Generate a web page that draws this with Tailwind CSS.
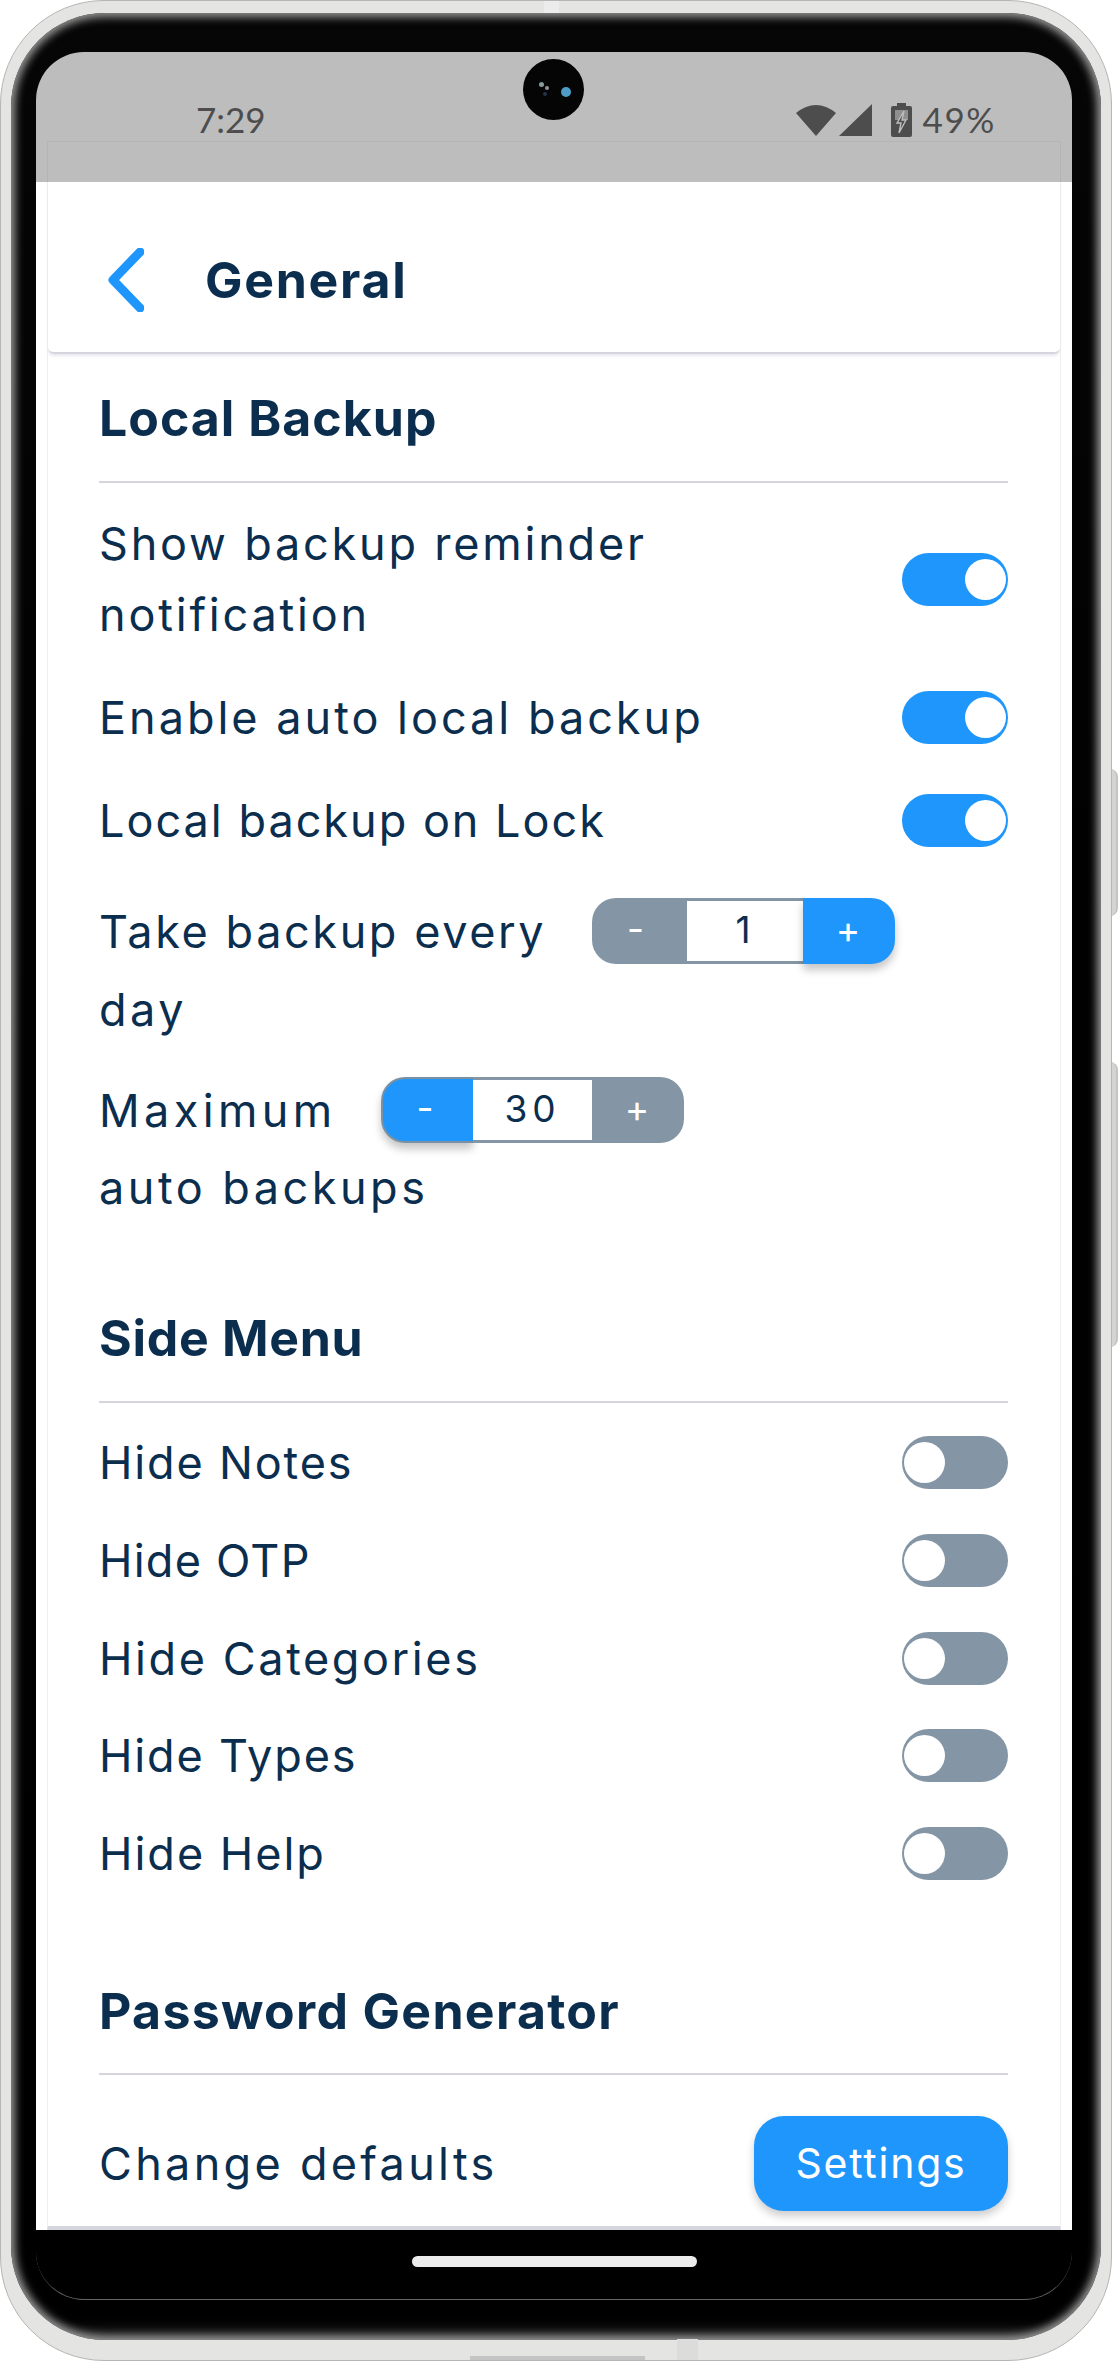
<!DOCTYPE html>
<html lang="en">
<head>
    <meta charset="UTF-8">
    <title>General</title>
    <script src="https://cdn.jsdelivr.net/npm/@tailwindcss/browser@4"></script>
</head>
<body class="bg-white font-[Inter,sans-serif] text-[#0b2e4f]">
<div class="relative w-[1118px] h-[2362px] overflow-hidden">
    <!-- side buttons -->
    <div class="absolute left-[1108px] top-[769px] w-[10px] h-[147px] rounded-r-[8px] bg-[#d4d4d2] border-r-2 border-[#c4c4c4]"></div>
    <div class="absolute left-[1108px] top-[1062px] w-[10px] h-[285px] rounded-r-[8px] bg-[#d4d4d2] border-r-2 border-[#c4c4c4]"></div>

    <!-- device -->
    <div class="relative w-[1112px] h-[2361px] rounded-[104px] bg-[#e4e4e2] border border-[#b5b5b3] pt-[12px] px-[10px]">
        <div class="absolute left-[543px] top-0 w-[15px] h-[12px] bg-[#ececec]"></div>
        <div class="absolute left-[469px] bottom-0 w-[175px] h-[4px] bg-[#c4c4c4]"></div>
        <div class="absolute left-[676px] bottom-0 w-[21px] h-[21px] bg-[#dcdcdc]"></div>

        <div class="w-[1090px] h-[2327px] rounded-[94px] bg-linear-to-b from-[#060606] via-black via-[98.8%] to-[#2b2b2b] shadow-[inset_0_0_8px_4px_#9a9a9a] pt-[39px] pl-[25px]">
            <div class="relative w-[1036px] h-[2248px] rounded-[48px] overflow-hidden border-b border-[#666] bg-black flex flex-col">
                <!-- status bar -->
                <div class="bg-[#bdbdbd] h-[130px] shrink-0 text-[#4d4d4d]">
                    <div class="h-[89px] flex justify-between pt-[51px] pl-[160px] pr-[76px] text-[35px] leading-[36px] font-[Lato,sans-serif]">
                        <span class="-mt-[2px]">7:29</span>
                        <div class="flex items-start">
                            <svg width="40" height="33" viewBox="0 0 40 33"><path d="M20 33 L0 10 Q20 -6 40 10 Z" fill="#4d4d4d"/></svg>
                            <svg class="ml-[3px] mt-[1px]" width="33" height="32" viewBox="0 0 33 32"><path d="M0 32 H33 V0 Z" fill="#4d4d4d"/></svg>
                            <svg class="ml-[19px]" width="21" height="34" viewBox="0 0 21 34">
                                <path d="M6 0 H15 V3 H19 Q21 3 21 5 V32 Q21 34 19 34 H2 Q0 34 0 32 V5 Q0 3 2 3 H6 Z" fill="#4d4d4d"/>
                                <path d="M4 7 H17 V17 H4 Z" fill="#8f8f8f"/>
                                <path d="M13 8 L6 20 H10 L8 30 L15 17 H11 Z" fill="#4d4d4d" stroke="#bdbdbd" stroke-width="1.4"/>
                            </svg>
                            <span class="ml-[11px] -mt-[2px] tracking-[1.6px]">49%</span>
                        </div>
                    </div>
                    <div class="mx-[11px] h-[41px] border-t border-x border-[#b4b4b4]"></div>
                </div>

                <!-- camera -->
                <div class="absolute left-[487px] top-[7px] w-[61px] h-[61px] rounded-full bg-[#050505]">
                    <div class="absolute left-[16px] top-[23px] w-[5px] h-[5px] rounded-full bg-[#8a9a9a]"></div>
                    <div class="absolute left-[22px] top-[27px] w-[4px] h-[4px] rounded-full bg-[#9a8fa0]"></div>
                    <div class="absolute left-[20px] top-[33px] w-[4px] h-[4px] rounded-full bg-[#24344f]"></div>
                    <div class="absolute left-[38px] top-[28px] w-[10px] h-[10px] rounded-full bg-[#4d9cc8]"></div>
                </div>

                <!-- app -->
                <div class="bg-white h-[2048px] shrink-0">
                    <div class="mx-[11px] h-full border-x border-[#eeeeee] border-b-[4px] border-b-[#d5d5e0] flex flex-col">
                        <header class="h-[172px] shrink-0 flex items-center pl-[60px] pt-[25px] border-b-2 border-[#d5d5e0] rounded-b-[6px] shadow-[0_2px_3px_#e8e8ee]">
                            <svg class="mr-[61px]" width="36" height="64" viewBox="0 0 36 64" fill="none" stroke="#1e96fc" stroke-width="9" stroke-linecap="round" stroke-linejoin="round"><path d="M32 4 L5 32 L32 60"/></svg>
                            <h1 class="text-[50px] leading-[60px] font-bold tracking-[1.7px]">General</h1>
                        </header>

                        <main class="pl-[51px] pr-[52px] pt-[34px] text-[45px] leading-[71px]">
                            <h2 class="text-[50px] leading-[60px] font-bold tracking-[1px] pb-[33px] border-b-2 border-[#d5d5e0]">Local Backup</h2>

                            <div class="mt-[25px] flex flex-col gap-[32px]">
                                <div class="flex items-center justify-between">
                                    <span class="w-[700px] tracking-[2.8px]">Show backup reminder notification</span>
                                    <div class="w-[106px] h-[53px] rounded-full bg-[#1e96fc] flex items-center justify-end pr-[2px]"><div class="w-[41px] h-[41px] rounded-full bg-white"></div></div>
                                </div>
                                <div class="flex items-center justify-between">
                                    <span class="tracking-[3px]">Enable auto local backup</span>
                                    <div class="w-[106px] h-[53px] rounded-full bg-[#1e96fc] flex items-center justify-end pr-[2px]"><div class="w-[41px] h-[41px] rounded-full bg-white"></div></div>
                                </div>
                                <div class="flex items-center justify-between">
                                    <span class="tracking-[2px]">Local backup on Lock</span>
                                    <div class="w-[106px] h-[53px] rounded-full bg-[#1e96fc] flex items-center justify-end pr-[2px]"><div class="w-[41px] h-[41px] rounded-full bg-white"></div></div>
                                </div>
                                <div class="mt-[10px]">
                                    <div class="flex items-center h-[66px]">
                                        <span class="w-[493px] tracking-[2.6px]">Take backup every</span>
                                        <div class="flex h-[66px] w-[303px] text-[37px] leading-none">
                                            <div class="w-[93px] rounded-l-[24px] bg-[#8496a5] text-white flex items-center justify-center pb-[6px] pr-[6px]">-</div>
                                            <div class="w-[118px] bg-white border-y-[3px] border-l-2 border-[#8496a5] flex items-center justify-center pb-[4px] pr-[4px]">1</div>
                                            <div class="w-[92px] rounded-r-[24px] bg-[#1e96fc] text-white flex items-center justify-center pb-[4px] pr-[2px] shadow-[0_6px_8px_#0000003a]">+</div>
                                        </div>
                                    </div>
                                    <div class="mt-[10px] tracking-[3.5px]">day</div>
                                </div>
                                <div>
                                    <div class="flex items-center h-[66px]">
                                        <span class="w-[282px] tracking-[4.4px]">Maximum</span>
                                        <div class="flex h-[66px] w-[303px] text-[37px] leading-none">
                                            <div class="w-[92px] rounded-l-[24px] bg-[#1e96fc] text-white flex items-center justify-center pb-[6px] pr-[6px] border-2 border-r-0 border-[#7a90a3] shadow-[0_6px_8px_#0000003a]">-</div>
                                            <div class="w-[119px] bg-white border-y-[3px] border-[#8496a5] flex items-center justify-center tracking-[5px] pb-[4px]">30</div>
                                            <div class="w-[92px] rounded-r-[24px] bg-[#8496a5] text-white flex items-center justify-center pb-[4px] pr-[2px]">+</div>
                                        </div>
                                    </div>
                                    <div class="mt-[9px] tracking-[3.5px]">auto backups</div>
                                </div>
                            </div>

                            <h2 class="mt-[85px] text-[50px] leading-[60px] font-bold tracking-[0.7px] pb-[33px] border-b-2 border-[#d5d5e0]">Side Menu</h2>
                            <div class="mt-[33px] flex flex-col gap-[44.75px]">
                                <div class="flex items-center justify-between h-[53px]">
                                    <span class="tracking-[1.85px]">Hide Notes</span>
                                    <div class="w-[106px] h-[53px] rounded-full bg-[#8496a5] flex items-center pl-[2px]"><div class="w-[41px] h-[41px] rounded-full bg-white"></div></div>
                                </div>
                                <div class="flex items-center justify-between h-[53px]">
                                    <span class="tracking-[1.25px]">Hide OTP</span>
                                    <div class="w-[106px] h-[53px] rounded-full bg-[#8496a5] flex items-center pl-[2px]"><div class="w-[41px] h-[41px] rounded-full bg-white"></div></div>
                                </div>
                                <div class="flex items-center justify-between h-[53px]">
                                    <span class="tracking-[2.6px]">Hide Categories</span>
                                    <div class="w-[106px] h-[53px] rounded-full bg-[#8496a5] flex items-center pl-[2px]"><div class="w-[41px] h-[41px] rounded-full bg-white"></div></div>
                                </div>
                                <div class="flex items-center justify-between h-[53px]">
                                    <span class="tracking-[1.85px]">Hide Types</span>
                                    <div class="w-[106px] h-[53px] rounded-full bg-[#8496a5] flex items-center pl-[2px]"><div class="w-[41px] h-[41px] rounded-full bg-white"></div></div>
                                </div>
                                <div class="flex items-center justify-between h-[53px]">
                                    <span class="tracking-[2px]">Hide Help</span>
                                    <div class="w-[106px] h-[53px] rounded-full bg-[#8496a5] flex items-center pl-[2px]"><div class="w-[41px] h-[41px] rounded-full bg-white"></div></div>
                                </div>
                            </div>

                            <h2 class="mt-[101px] text-[50px] leading-[60px] font-bold tracking-[1.3px] pb-[32px] border-b-2 border-[#d5d5e0]">Password Generator</h2>
                            <div class="mt-[41px] flex items-center justify-between">
                                <span class="tracking-[3.3px]">Change defaults</span>
                                <button class="w-[254px] h-[95px] rounded-[30px] bg-[#1e96fc] text-white text-[41px] tracking-[1.75px] shadow-[0_5px_8px_#00000033]">Settings</button>
                            </div>
                        </main>
                    </div>
                </div>

                <!-- nav bar -->
                <div class="flex-1 flex justify-center pt-[26px]">
                    <div class="w-[285px] h-[11px] rounded-full bg-[#ececec]"></div>
                </div>
            </div>
        </div>
    </div>
</div>
</body>
</html>
